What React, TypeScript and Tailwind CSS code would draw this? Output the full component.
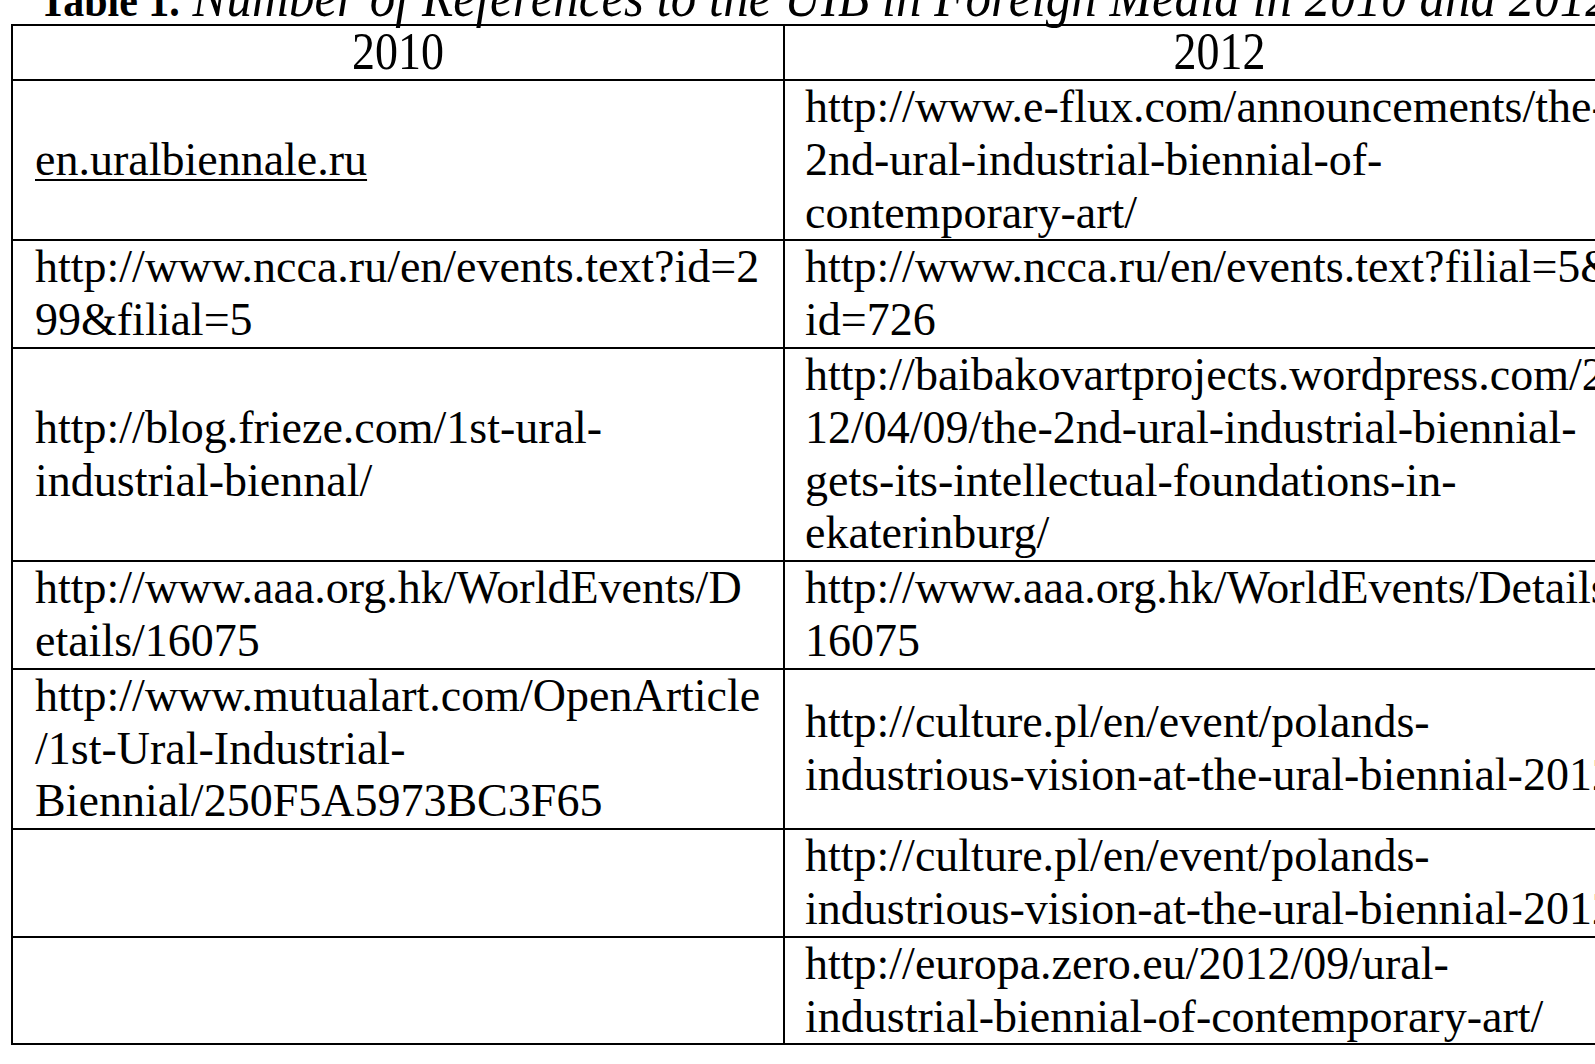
import React from "react";

const rows: { a: string[]; b: string[]; underlineA?: boolean }[] = [
  {
    a: ["en.uralbiennale.ru"],
    underlineA: true,
    b: [
      "http://www.e-flux.com/announcements/the-",
      "2nd-ural-industrial-biennial-of-",
      "contemporary-art/",
    ],
  },
  {
    a: ["http://www.ncca.ru/en/events.text?id=2", "99&filial=5"],
    b: ["http://www.ncca.ru/en/events.text?filial=5&", "id=726"],
  },
  {
    a: ["http://blog.frieze.com/1st-ural-", "industrial-biennal/"],
    b: [
      "http://baibakovartprojects.wordpress.com/20",
      "12/04/09/the-2nd-ural-industrial-biennial-",
      "gets-its-intellectual-foundations-in-",
      "ekaterinburg/",
    ],
  },
  {
    a: ["http://www.aaa.org.hk/WorldEvents/D", "etails/16075"],
    b: ["http://www.aaa.org.hk/WorldEvents/Details/", "16075"],
  },
  {
    a: [
      "http://www.mutualart.com/OpenArticle",
      "/1st-Ural-Industrial-",
      "Biennial/250F5A5973BC3F65",
    ],
    b: [
      "http://culture.pl/en/event/polands-",
      "industrious-vision-at-the-ural-biennial-2012",
    ],
  },
  {
    a: [],
    b: [
      "http://culture.pl/en/event/polands-",
      "industrious-vision-at-the-ural-biennial-2012",
    ],
  },
  {
    a: [],
    b: [
      "http://europa.zero.eu/2012/09/ural-",
      "industrial-biennial-of-contemporary-art/",
    ],
  },
];

function Lines({ lines, underline }: { lines: string[]; underline?: boolean }) {
  return (
    <>
      {lines.map((l, i) => (
        <div
          key={i}
          className={
            "whitespace-nowrap " +
            (underline ? "underline decoration-[1.5px] underline-offset-[4px]" : "")
          }
        >
          {l}
        </div>
      ))}
    </>
  );
}

export default function App() {
  return (
    <div
      className="w-[1595px] h-[1064px] overflow-hidden bg-white text-black"
      style={{ fontFamily: '"Liberation Serif", "Times New Roman", serif' }}
    >
      <div className="-mt-[24px] h-[48px] pl-[39px] text-[51px] leading-[48px] whitespace-nowrap origin-bottom scale-y-[1.1]">
        <span className="font-bold text-[42px]">Table 1.</span>
        <span className="italic"> Number of References to the UIB in Foreign Media in 2010 and 2012</span>
      </div>
      <div className="ml-[11px] w-[1645px] grid grid-cols-[772px_871px] border-l-2 border-t-2 border-black text-[46px] leading-[52.8px]">
        <div className="h-[55px] border-r-2 border-b-2 border-black flex items-center justify-center">
          <span className="inline-block scale-y-[1.15]">2010</span>
        </div>
        <div className="h-[55px] border-r-2 border-b-2 border-black flex items-center justify-center">
          <span className="inline-block scale-y-[1.15]">2012</span>
        </div>
        {rows.map((r, i) => (
          <React.Fragment key={i}>
            <div className="border-r-2 border-b-2 border-black pl-[22px] flex flex-col justify-center min-h-[107px]">
              <Lines lines={r.a} underline={r.underlineA} />
            </div>
            <div className="border-r-2 border-b-2 border-black pl-[20px] flex flex-col justify-center overflow-hidden">
              <Lines lines={r.b} />
            </div>
          </React.Fragment>
        ))}
      </div>
    </div>
  );
}
